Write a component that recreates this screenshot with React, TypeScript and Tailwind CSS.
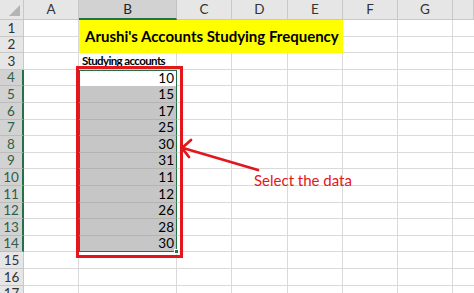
const cols = ["A", "B", "C", "D", "E", "F", "G", ""];
const values: Record<number, number> = {
  4: 10,
  5: 15,
  6: 17,
  7: 25,
  8: 30,
  9: 31,
  10: 11,
  11: 12,
  12: 26,
  13: 28,
  14: 30,
};

const font = { fontFamily: "Lato, 'Open Sans', sans-serif" };

function isSel(r: number) {
  return r >= 4 && r <= 14;
}

export default function App() {
  const rows = Array.from({ length: 17 }, (_, i) => i + 1);

  return (
    <div
      className="relative h-[293px] w-[474px] overflow-hidden bg-white text-[#222]"
      style={font}
    >
      <div className="grid grid-cols-[24px_55px_98px_55px_56px_55px_55px_55px_1fr] grid-rows-[20px_repeat(17,16.6px)]">
        {/* corner */}
        <div className="relative border-b border-r border-[#c8c8c8] bg-[#e6e6e6]">
          <div className="absolute bottom-[3px] right-[3px] h-0 w-0 border-b-[11px] border-l-[11px] border-b-[#b4b4b4] border-l-transparent" />
        </div>
        {cols.map((c) => (
          <div
            key={c || "h"}
            className={
              c === "B"
                ? "flex items-center justify-center border-b-2 border-r border-b-[#217346] border-r-[#c0c0c0] bg-[#d2d2d2] text-[13.5px] text-[#222]"
                : "flex items-center justify-center border-b border-r border-[#c8c8c8] bg-[#e6e6e6] text-[13.5px] text-[#333]"
            }
          >
            {c}
          </div>
        ))}

        {rows.map((r) => (
          <Row key={r} r={r} />
        ))}
      </div>

      {/* red highlight box */}
      <div className="absolute left-[76px] top-[66px] h-[192px] w-[107px] border-[3px] border-[#e3161c]" />

      {/* arrow */}
      <svg
        className="absolute left-0 top-0"
        width="474"
        height="293"
        viewBox="0 0 474 293"
      >
        <line
          x1="258"
          y1="170"
          x2="183"
          y2="148"
          stroke="#e3161c"
          strokeWidth="2.8"
          strokeLinecap="round"
        />
        <polyline
          points="191,140 182,148 189,157"
          fill="none"
          stroke="#e3161c"
          strokeWidth="2.8"
          strokeLinecap="round"
          strokeLinejoin="round"
        />
      </svg>

      <div className="absolute left-[254px] top-[171px] text-[15px] leading-[18px] text-[#e3161c]">
        Select the data
      </div>
    </div>
  );
}

function Row({ r }: { r: number }) {
  const sel = isSel(r);
  return (
    <>
      <div
        className={
          sel
            ? "flex items-center justify-center border-b border-r-2 border-b-[#bcbcbc] border-r-[#217346] bg-[#d2d2d2] text-[13.5px] text-[#2f5f45]"
            : "flex items-center justify-center border-b border-r border-[#c8c8c8] bg-[#e6e6e6] text-[13.5px] text-[#333]"
        }
      >
        {r}
      </div>
      <div className="border-b border-r border-[#dadada]" />
      {r === 1 && (
        <div className="col-span-4 row-span-2 flex items-center bg-[#ffff00] pl-[6px] text-[15px] font-bold text-black">
          Arushi's Accounts Studying Frequency
        </div>
      )}
      {r === 2 ? null : r === 1 ? null : r === 3 ? (
        <div className="flex items-end whitespace-nowrap border-b border-r border-[#dadada] pb-[2px] pl-[3px] text-[11.5px] font-bold leading-none tracking-[-0.6px] text-black">
          Studying accounts
        </div>
      ) : (
        <div
          className={
            sel
              ? r === 4
                ? "relative flex items-center justify-end border-l border-r border-t border-[#217346] bg-white pr-[2px] text-[13.5px] text-black"
                : r === 14
                  ? "relative flex items-center justify-end border-b border-l border-r border-[#217346] bg-[#c6c6c6] pr-[2px] text-[13.5px] text-black"
                  : "flex items-center justify-end border-b border-l border-r border-b-[#b4b4b4] border-l-[#217346] border-r-[#217346] bg-[#c6c6c6] pr-[2px] text-[13.5px] text-black"
              : "border-b border-r border-[#dadada]"
          }
        >
          {values[r] ?? ""}
          {r === 14 && (
            <div className="absolute -bottom-[3px] -right-[3px] h-[5px] w-[5px] border border-white bg-[#217346]" />
          )}
        </div>
      )}
      {r > 2 && (
        <>
          <div className="border-b border-r border-[#dadada]" />
          <div className="border-b border-r border-[#dadada]" />
          <div className="border-b border-r border-[#dadada]" />
        </>
      )}
      <div className="border-b border-r border-[#dadada]" />
      <div className="border-b border-r border-[#dadada]" />
      <div className="border-b border-[#dadada]" />
    </>
  );
}
